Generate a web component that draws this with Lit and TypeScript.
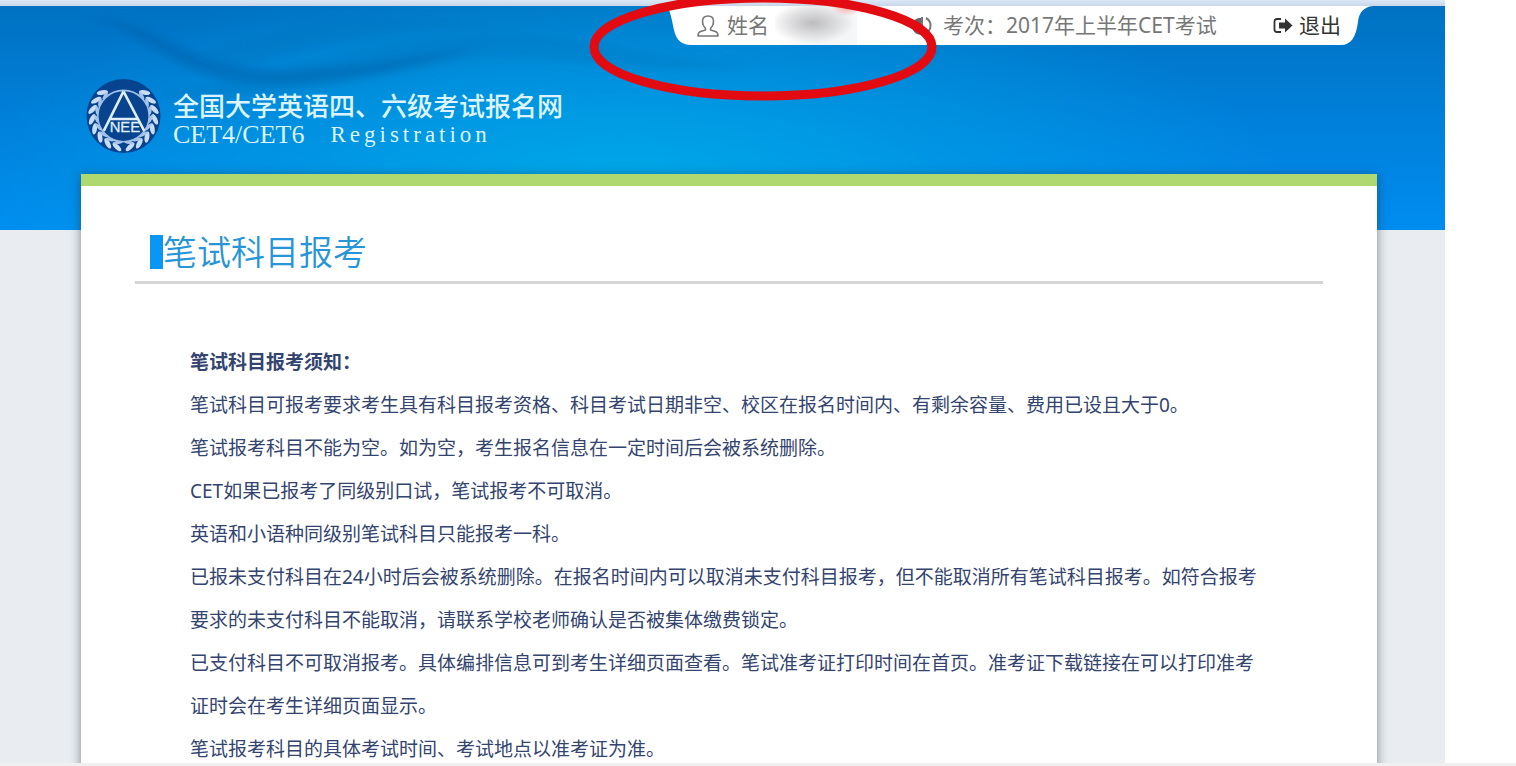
import { LitElement, html, svg, css } from "lit";
import { customElement } from "lit/decorators.js";

const NOTICES = [
  "笔试科目可报考要求考生具有科目报考资格、科目考试日期非空、校区在报名时间内、有剩余容量、费用已设且大于0。",
  "笔试报考科目不能为空。如为空，考生报名信息在一定时间后会被系统删除。",
  "CET如果已报考了同级别口试，笔试报考不可取消。",
  "英语和小语种同级别笔试科目只能报考一科。",
  "已报未支付科目在24小时后会被系统删除。在报名时间内可以取消未支付科目报考，但不能取消所有笔试科目报考。如符合报考要求的未支付科目不能取消，请联系学校老师确认是否被集体缴费锁定。",
  "已支付科目不可取消报考。具体编排信息可到考生详细页面查看。笔试准考证打印时间在首页。准考证下载链接在可以打印准考证时会在考生详细页面显示。",
  "笔试报考科目的具体考试时间、考试地点以准考证为准。",
];

// Angles of the laurel leaves, measured from the bottom of the seal.
const LEAVES = [12, 30, 48, 66, 84, 102, 120, 138];

@customElement("site-seal")
class SiteSeal extends LitElement {
  static styles = css`
    :host { display: block; flex: none; width: 75px; height: 77px; }
    svg { display: block; width: 100%; height: 100%; }
    .letters { font: 400 15px "Liberation Sans", sans-serif; fill: #dfeeff; stroke: #dfeeff; stroke-width: 0.3px; }
  `;

  render() {
    const leaf = (angle: number) => svg`
      <g transform="rotate(${angle} 38 38)">
        <ellipse cx="38" cy="70" rx="5.8" ry="2.4" transform="rotate(${angle > 0 ? 32 : -32} 38 70)" fill="#c9dcf5"/>
        <ellipse cx="38" cy="65.5" rx="4.5" ry="1.6" transform="rotate(${angle > 0 ? -18 : 18} 38 65.5)" fill="#a8c4e8"/>
      </g>`;
    return html`
      <svg viewBox="0 0 76 77" role="img" aria-label="NEEA">
        <circle cx="38" cy="38" r="37.5" fill="#07438f"/>
        ${LEAVES.map(leaf)}
        ${LEAVES.map((a) => leaf(-a))}
        <circle cx="38" cy="38" r="26" fill="#07438f" stroke="#9fc0e8" stroke-width="1.6"/>
        <path d="M38 13L18 53M38 13L59 53M25 41H52" fill="none" stroke="#dfeeff" stroke-width="2.6"/>
        <text class="letters" x="24" y="54">NEE</text>
      </svg>`;
  }
}

@customElement("session-bar")
class SessionBar extends LitElement {
  static styles = css`
    :host { position: relative; display: flex; height: 39px; color: #777; font-size: 21px; line-height: 39px; }
    .edge { display: block; flex: none; width: 24px; height: 39px; }
    .edge.right { width: 32px; }
    .items { display: flex; align-items: center; background: #fff; }
    .item { display: flex; align-items: center; box-sizing: border-box; gap: 8px; white-space: nowrap; }
    .name { width: 84px; padding-left: 6px; }
    .session { width: 366px; padding-left: 55px; gap: 11px; }
    .exit { color: #333; text-decoration: none; gap: 6px; padding-left: 50px; }
    .hidden-name {
      width: 82px; height: 39px; flex: none;
      background:
        radial-gradient(ellipse 16px 10px at 72px 0, #ff9a9a, transparent),
        radial-gradient(ellipse 42px 20px at 38px 17px, #bdbdc0, transparent),
        linear-gradient(90deg, #fff, #f3f4f5 50%, #f6f7f8);
    }
    .ring { position: absolute; left: -80px; top: -12px; width: 352px; height: 110px; pointer-events: none; }
  `;

  render() {
    return html`
      <svg class="edge" viewBox="0 0 24 39" aria-hidden="true"><path d="M24 0H0C4 7 5 15 7 24C9 34 15 39 24 39Z" fill="#fff"/></svg>
      <div class="items">
        <div class="item name">
          <svg width="22" height="22" viewBox="0 0 22 22" fill="none" stroke="#777" stroke-width="1.5" stroke-linejoin="round" aria-hidden="true">
            <path d="M8.500 13.500C6.500 11.500 5.500 9 5.500 6.500C5.500 3 7.500 1 11 1S16.500 3 16.500 6.500C16.500 9 15.500 11.500 13.500 13.500V15L18.500 16.500Q21 17.500 21 21H1Q1 17.500 3.500 16.500L8.500 15Z"/>
          </svg>
          <span>姓名</span>
        </div>
        <div class="hidden-name"></div>
        <div class="item session">
          <svg width="20" height="20" viewBox="0 0 20 20" aria-hidden="true">
            <path d="M7 2A8.500 8.500 0 1 0 14 17L10 10V2Z" fill="#666"/>
            <path d="M10 1V10" fill="none" stroke="#777" stroke-width="2"/>
            <path d="M14 2A8.500 8.500 0 0 1 14 17" fill="none" stroke="#777" stroke-width="2"/>
          </svg>
          <span>考次：2017年上半年CET考试</span>
        </div>
        <a class="item exit" href="#">
          <svg width="20" height="18" viewBox="0 0 20 18" aria-hidden="true">
            <path d="M8 2H4Q1.500 2 1.500 4.500V12.500Q1.500 15 4 15H8" fill="none" stroke="#333" stroke-width="1.8"/>
            <path d="M6 5.500H12V1.500L19.500 8.500L12 15.500V11.500H6Z" fill="#333"/>
          </svg>
          <span>退出</span>
        </a>
      </div>
      <svg class="edge right" viewBox="0 0 32 39" aria-hidden="true"><path d="M0 0H32C22 1 18 7 17 16C15 31 10 39 0 39Z" fill="#fff"/></svg>
      <svg class="ring" viewBox="0 0 352 110" aria-hidden="true">
        <ellipse cx="176" cy="53" rx="169" ry="49" fill="none" stroke="#e30b12" stroke-width="9"/>
      </svg>`;
  }
}

@customElement("app-root")
class AppRoot extends LitElement {
  static styles = css`
    :host {
      display: flex; flex-direction: column; height: 100vh; overflow: hidden; background: #fff;
      font-family: "Noto Sans", "Noto Sans CJK SC", sans-serif;
    }
    .page { flex: 1; min-height: 0; overflow: hidden; margin-right: 71px; background: #e9edf1; }
    .strip { height: 6px; background: linear-gradient(#dbe8f8, #c9d6e8); }
    .banner {
      position: relative; height: 224px; box-sizing: border-box; padding: 0 72px 0 86px;
      background:
        radial-gradient(ellipse 46% 100% at 43% 82%, #00a9e8, rgba(0, 160, 230, 0.6) 50%, transparent),
        linear-gradient(#0072c2, #0082de 60%, #008df0);
    }
    .waves { position: absolute; left: 0; top: 0; width: 800px; height: 130px; }
    .top { position: relative; display: flex; justify-content: flex-end; }
    .brand { position: relative; display: flex; gap: 12px; margin-top: 33px; color: #dcf4ff; }
    .brand-text { padding-top: 12px; }
    .site { margin: 0; font-size: 26px; line-height: 32px; font-weight: 500; }
    .latin { display: flex; gap: 26px; margin: 0; font: 26px/26px "Liberation Serif", serif; }
    .tracked { font-size: 23px; letter-spacing: 4px; }
    .card {
      position: relative; margin: -56px 68px 0 81px; padding: 44px 54px; min-height: 100%; box-sizing: border-box;
      background: #fff; border-top: 12px solid #b0d870; box-shadow: 0 2px 10px rgba(40, 50, 70, 0.55);
    }
    .title { display: flex; align-items: center; margin: 0; padding: 0 15px 7px; height: 44px; border-bottom: 3px solid #d4d4d6; color: #2795d8; font-size: 34px; line-height: 44px; font-weight: 350; }
    .title::before { content: ""; width: 13px; height: 34px; background: #0b95f5; }
    .notice { padding: 57px 55px 0; color: #33446f; font-size: 19px; line-height: 43px; }
    .notice h2, .notice p { margin: 0; font-size: 19px; }
    .foot { flex: none; height: 3px; background: #f0f0f0; }
  `;

  render() {
    return html`
      <div class="page">
        <div class="strip"></div>
        <header class="banner">
          <svg class="waves" viewBox="0 0 800 130" aria-hidden="true">
            <defs><filter id="soft"><feGaussianBlur stdDeviation="4"/></filter></defs>
            <g filter="url(#soft)">
              <path d="M90 10C170 40 175 76 275 79C350 78 420 60 480 40C410 50 350 62 275 64C190 62 170 20 90 10Z" fill="#005fa8" opacity="0.5"/>
              <path d="M165 84C300 72 380 24 520 28C600 32 660 56 760 58C660 76 580 50 490 52C370 66 300 96 165 92Z" fill="#006db4" opacity="0.25"/>
              <path d="M200 48C300 10 430 4 520 24C440 14 330 30 240 62Z" fill="#0070b0" opacity="0.25"/>
            </g>
          </svg>
          <div class="top"><session-bar></session-bar></div>
          <div class="brand">
            <site-seal></site-seal>
            <div class="brand-text">
              <h1 class="site">全国大学英语四、六级考试报名网</h1>
              <p class="latin"><span>CET4/CET6</span><span class="tracked">Registration</span></p>
            </div>
          </div>
        </header>
        <main class="card">
          <h2 class="title">笔试科目报考</h2>
          <section class="notice">
            <h2>笔试科目报考须知：</h2>
            ${NOTICES.map((text) => html`<p>${text}</p>`)}
          </section>
        </main>
      </div>
      <div class="foot"></div>`;
  }
}
